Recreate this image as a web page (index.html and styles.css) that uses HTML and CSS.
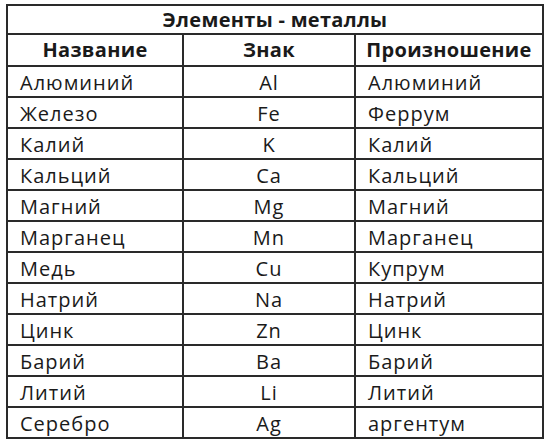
FILE: index.html
```html
<!DOCTYPE html>
<html lang="ru">
<head>
<meta charset="utf-8">
<link rel="stylesheet" href="styles.css">
</head>
<body>
<table class="metals">
  <colgroup><col class="c1"><col class="c2"><col class="c3"></colgroup>
  <tr class="title"><th colspan="3">Элементы - металлы</th></tr>
  <tr class="head"><th>Название</th><th>Знак</th><th>Произношение</th></tr>
  <tr><td>Алюминий</td><td class="sym">Al</td><td>Алюминий</td></tr>
  <tr><td>Железо</td><td class="sym">Fe</td><td>Феррум</td></tr>
  <tr><td>Калий</td><td class="sym">K</td><td>Калий</td></tr>
  <tr><td>Кальций</td><td class="sym">Ca</td><td>Кальций</td></tr>
  <tr><td>Магний</td><td class="sym">Mg</td><td>Магний</td></tr>
  <tr><td>Марганец</td><td class="sym">Mn</td><td>Марганец</td></tr>
  <tr><td>Медь</td><td class="sym">Cu</td><td>Купрум</td></tr>
  <tr><td>Натрий</td><td class="sym">Na</td><td>Натрий</td></tr>
  <tr><td>Цинк</td><td class="sym">Zn</td><td>Цинк</td></tr>
  <tr><td>Барий</td><td class="sym">Ba</td><td>Барий</td></tr>
  <tr><td>Литий</td><td class="sym">Li</td><td>Литий</td></tr>
  <tr><td>Серебро</td><td class="sym">Ag</td><td>аргентум</td></tr>
</table>
</body>
</html>
```
FILE: styles.css
```css
html, body {
  margin: 0;
  padding: 0;
  background: #ffffff;
}
body {
  padding: 4px 0 0 6px;
  font-family: "Open Sans", "Noto Sans", "Liberation Sans", sans-serif;
  color: #1a1a1a;
}
.metals {
  border-collapse: collapse;
  table-layout: fixed;
  width: 536px;
  font-size: 20px;
}
.c1 { width: 176px; }
.c2 { width: 172px; }
.c3 { width: 188px; }
.metals th, .metals td {
  border: 2px solid #2a2a2a;
  padding: 0 0 0 12px;
  height: 27px;
  line-height: 26px;
  text-align: left;
  white-space: nowrap;
  overflow: hidden;
}
.metals td {
  padding-top: 2px;
  letter-spacing: 1px;
}
.metals th {
  font-weight: 700;
  text-align: center;
  padding: 0;
  letter-spacing: 0.3px;
}
.title th { height: 27px; }
.head th { height: 30px; }
.metals td.sym {
  text-align: center;
  padding-left: 0;
}
```
